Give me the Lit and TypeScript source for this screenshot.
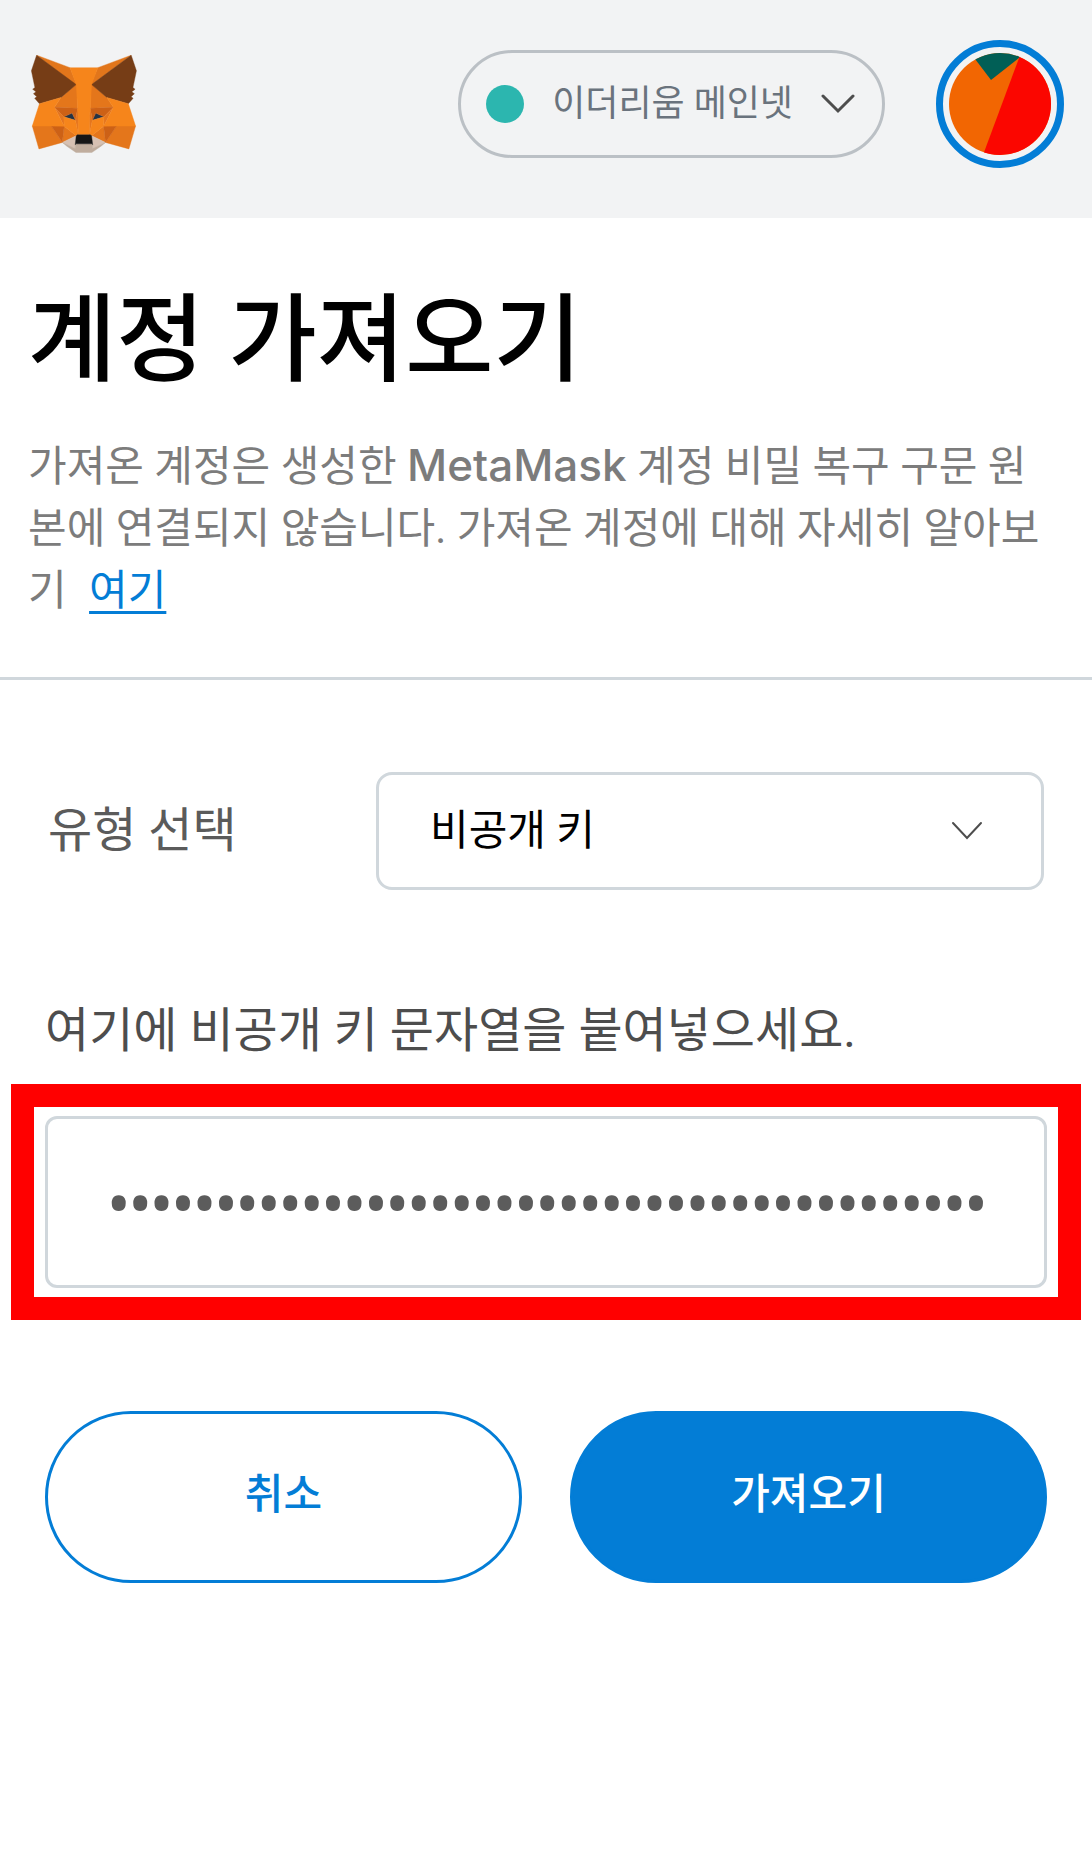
import { LitElement, html, css, svg } from 'lit';
import { customElement, state } from 'lit/decorators.js';

// Facets of the fox logo, painted back to front
const FOX_FACETS: [string, string[]][] = [
  ['#e2761b', ['274.1 35.5 174.6 109.4 193 65.8', '44.4 35.5 143.1 110.1 125.6 65.8']],
  ['#e4761b', [
    '238.3 206.8 211.8 247.4 268.5 263 284.8 207.7',
    '33.9 207.7 50.1 263 106.8 247.4 80.3 206.8',
    '103.6 138.2 87.8 162.1 144.1 164.6 142.1 104.1',
    '214.9 138.2 175.9 103.4 174.6 164.6 230.8 162.1',
    '106.8 247.4 140.6 230.9 111.4 208.1',
    '177.9 230.9 211.8 247.4 207.1 208.1',
  ]],
  ['#d7c1b3', [
    '211.8 247.4 177.9 230.9 180.6 253 180.3 262.3',
    '106.8 247.4 138.3 262.3 138.1 253 140.6 230.9',
  ]],
  ['#233447', ['138.8 193.5 110.6 185.2 130.5 176.1', '179.7 193.5 188 176.1 208 185.2']],
  ['#cd6116', [
    '106.8 247.4 111.6 206.8 80.3 207.7',
    '207 206.8 211.8 247.4 238.3 207.7',
    '230.8 162.1 174.6 164.6 179.8 193.5 188.1 176.1 208.1 185.2',
    '110.6 185.2 130.6 176.1 138.8 193.5 144.1 164.6 87.8 162.1',
  ]],
  ['#e4751f', [
    '87.8 162.1 111.4 208.1 110.6 185.2',
    '208.1 185.2 207.1 208.1 230.8 162.1',
    '144.1 164.6 138.8 193.5 145.4 227.6 146.9 182.7',
    '174.6 164.6 171.9 182.6 173.1 227.6 179.8 193.5',
  ]],
  ['#f6851b', [
    '179.8 193.5 173.1 227.6 177.9 230.9 207.1 208.1 208.1 185.2',
    '110.6 185.2 111.4 208.1 140.6 230.9 145.4 227.6 138.8 193.5',
  ]],
  ['#c0ad9e', [
    '180.3 262.3 180.6 253 178.1 250.8 140.4 250.8 138.1 253 138.3 262.3 106.8 247.4 117.8 256.4 140.1 271.9 178.4 271.9 200.8 256.4 211.8 247.4',
  ]],
  ['#161616', ['177.9 230.9 173.1 227.6 145.4 227.6 140.6 230.9 138.1 253 140.4 250.8 178.1 250.8 180.6 253']],
  ['#763d16', [
    '278.3 114.2 286.8 73.4 274.1 35.5 177.9 106.9 214.9 138.2 267.2 153.5 278.8 140 273.8 136.4 281.8 129.1 275.6 124.3 283.6 118.2',
    '31.8 73.4 40.3 114.2 34.9 118.2 42.9 124.3 36.8 129.1 44.8 136.4 39.8 140 51.3 153.5 103.6 138.2 140.6 106.9 44.4 35.5',
  ]],
  ['#f6851b', [
    '267.2 153.5 214.9 138.2 230.8 162.1 207.1 208.1 238.3 207.7 284.8 207.7',
    '103.6 138.2 51.3 153.5 33.9 207.7 80.3 207.7 111.4 208.1 87.8 162.1',
    '174.6 164.6 177.9 106.9 193.1 65.8 125.6 65.8 140.6 106.9 144.1 164.6 145.3 182.8 145.4 227.6 173.1 227.6 173.3 182.8',
  ]],
];

@customElement('wallet-header')
export class WalletHeader extends LitElement {
  static styles = css`
    :host {
      display: block;
      background: #f2f3f4;
    }
    .bar {
      display: flex;
      align-items: center;
      padding: 40px 28px 50px 31px;
    }
    .logo {
      display: block;
      width: 106px;
      height: 98px;
      margin-right: auto;
    }
    .network {
      display: flex;
      align-items: center;
      gap: 28px;
      height: 108px;
      box-sizing: border-box;
      padding: 0 27px 0 25px;
      margin-right: 51px;
      border: 3px solid #bbc0c5;
      border-radius: 54px;
      background: none;
      color: #6a737d;
      font: 400 36px/54px Roboto, 'Noto Sans CJK KR', sans-serif;
    }
    .dot {
      width: 38px;
      height: 38px;
      border-radius: 50%;
      background: #2cb6af;
    }
    .chevron {
      display: block;
      width: 34px;
      height: 20px;
    }
    .account {
      box-sizing: border-box;
      width: 128px;
      height: 128px;
      padding: 6px;
      border: 7px solid #037dd6;
      border-radius: 50%;
      background: none;
    }
    .identicon {
      display: block;
      width: 102px;
      height: 102px;
      border-radius: 50%;
    }
  `;

  render() {
    return html`
      <header class="bar">
        <svg class="logo" viewBox="31 35 257 238" role="img" aria-label="MetaMask">
          ${FOX_FACETS.map(([color, shapes]) => shapes.map((points) => svg`
            <polygon points=${points} fill=${color} stroke=${color} stroke-linejoin="round"></polygon>
          `))}
        </svg>
        <button class="network" type="button">
          <span class="dot"></span>
          <span>이더리움 메인넷</span>
          <svg class="chevron" viewBox="0 0 34 20" aria-hidden="true">
            <path d="M2 2 L17 17 L32 2" fill="none" stroke="#4d4d4d" stroke-width="3" stroke-linecap="round"></path>
          </svg>
        </button>
        <button class="account" type="button" aria-label="내 계정">
          <svg class="identicon" viewBox="0 0 102 102" aria-hidden="true">
            <rect width="102" height="102" fill="#f26602"></rect>
            <polygon points="42 27 20 -2 80 -3" fill="#015f56"></polygon>
            <polygon points="73 -3 34 102 102 102 102 -3" fill="#fb0600"></polygon>
          </svg>
        </button>
      </header>
    `;
  }
}

@customElement('app-root')
export class AppRoot extends LitElement {
  static styles = css`
    :host {
      display: block;
      min-height: 100vh;
      background: #fff;
      font-family: Roboto, 'Noto Sans CJK KR', sans-serif;
    }
    .intro {
      padding: 58px 28px 55px;
      border-bottom: 3px solid #d0d7dc;
    }
    h1 {
      margin: 0 0 32px;
      color: #000;
      font-size: 96px;
      font-weight: 500;
      line-height: 128px;
    }
    .description {
      margin: 0;
      color: #7c7c7c;
      font-size: 42px;
      line-height: 62px;
      word-break: break-all;
    }
    .brand {
      font-family: Inter, sans-serif;
      font-size: 44px;
      font-weight: 500;
      line-height: 44px;
    }
    .description a {
      margin-left: 12px;
      color: #037dd6;
      text-decoration: underline;
      text-decoration-thickness: 3px;
      text-decoration-skip-ink: none;
      text-underline-offset: 6px;
    }
    form {
      padding: 92px 45px;
    }
    .type-row {
      display: grid;
      grid-template-columns: 328px 1fr;
      align-items: center;
      padding: 0 3px;
      margin-bottom: 109px;
    }
    label {
      display: block;
      color: #4d4d4d;
      font-size: 48px;
      line-height: 64px;
    }
    .type-row label {
      color: #5b5b5b;
    }
    .dropdown {
      display: grid;
      align-items: center;
    }
    .dropdown > * {
      grid-area: 1 / 1;
    }
    select {
      appearance: none;
      box-sizing: border-box;
      width: 100%;
      height: 118px;
      padding: 0 51px;
      border: 3px solid #d0d7dc;
      border-radius: 16px;
      background: #fff;
      color: #000;
      font: 400 42px/62px Roboto, 'Noto Sans CJK KR', sans-serif;
    }
    .caret {
      justify-self: end;
      width: 32px;
      height: 20px;
      margin-right: 61px;
      pointer-events: none;
    }
    .highlight {
      padding: 9px 11px;
      margin: 21px -34px 91px;
      border: 23px solid #ff0000;
    }
    .key {
      display: block;
      box-sizing: border-box;
      width: 100%;
      height: 172px;
      padding: 0 48px 0 60px;
      border: 3px solid #d0d7dc;
      border-radius: 12px;
      background: #fff;
      color: #5c5c5c;
      font-family: 'Open Sans', sans-serif;
      font-size: 57px;
      font-weight: 600;
    }
    .actions {
      display: grid;
      grid-template-columns: 1fr 1fr;
      gap: 48px;
    }
    .button {
      height: 172px;
      padding-bottom: 6px;
      border: 3px solid #037dd6;
      border-radius: 86px;
      background: #fff;
      color: #037dd6;
      font: 500 42px/62px Roboto, 'Noto Sans CJK KR', sans-serif;
    }
    .button.primary {
      background: #037dd6;
      color: #fff;
    }
  `;

  @state() private privateKey = 'k'.repeat(41);

  private onKeyInput(e: Event) {
    this.privateKey = (e.target as HTMLInputElement).value;
  }

  render() {
    return html`
      <wallet-header></wallet-header>
      <main>
        <section class="intro">
          <h1>계정 가져오기</h1>
          <p class="description">
            가져온 계정은 생성한 <span class="brand">MetaMask</span> 계정 비밀 복구 구문 원본에 연결되지 않습니다. 가져온 계정에 대해 자세히 알아보기
            <a href="#">여기</a>
          </p>
        </section>
        <form @submit=${(e: Event) => e.preventDefault()}>
          <div class="type-row">
            <label for="type">유형 선택</label>
            <div class="dropdown">
              <select id="type">
                <option>비공개 키</option>
              </select>
              <svg class="caret" viewBox="0 0 32 20" aria-hidden="true">
                <path d="M2 2 L16 17 L30 2" fill="none" stroke="#4d4d4d" stroke-width="2" stroke-linecap="round"></path>
              </svg>
            </div>
          </div>
          <label for="private-key">여기에 비공개 키 문자열을 붙여넣으세요.</label>
          <div class="highlight">
            <input
              class="key"
              id="private-key"
              type="password"
              autocomplete="off"
              .value=${this.privateKey}
              @input=${this.onKeyInput}
            />
          </div>
          <div class="actions">
            <button class="button" type="button">취소</button>
            <button class="button primary" type="submit">가져오기</button>
          </div>
        </form>
      </main>
    `;
  }
}
